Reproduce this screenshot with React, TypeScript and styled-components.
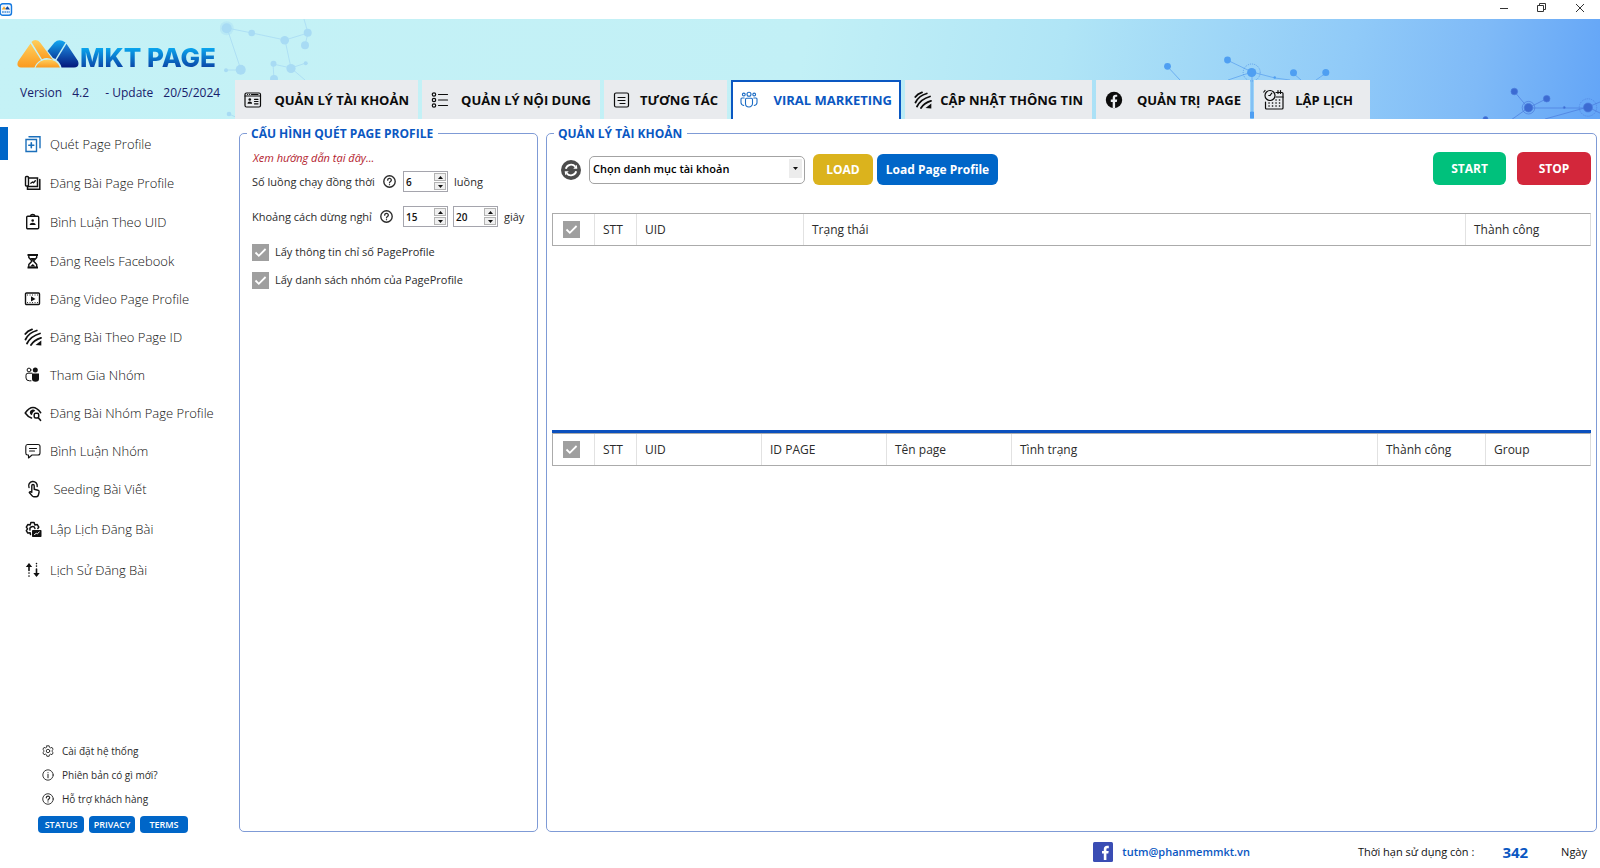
import React from "react";
import styled, { createGlobalStyle, css } from "styled-components";

const blue = "#0a57c2";
const fill = "#0066c8";
const line = "#7f9bd6";
const ink = "#2b2b2b";

const GlobalStyle = createGlobalStyle`
  * { box-sizing: border-box; }
  body {
    margin: 0;
    background: #fff;
    color: ${ink};
    font-family: "Open Sans", "Noto Sans", sans-serif;
    font-size: 12px;
    line-height: 18px;
  }
  button, input, select { font-family: inherit; }
  button { cursor: pointer; }
`;

/* ---------- shell ---------- */

const Window = styled.div`
  min-height: 100vh;
  display: flex;
  flex-direction: column;
`;

const TitleBar = styled.div`
  height: 19px;
  display: flex;
  align-items: center;
  justify-content: space-between;
`;

const WindowControls = styled.div`
  display: flex;
  gap: 18px;
  padding: 0 10px 3px 0;
  align-items: center;
`;

const WindowButton = styled.button`
  width: 20px;
  height: 16px;
  padding: 0;
  border: 0;
  background: none;
  display: flex;
  align-items: center;
  justify-content: center;
`;

const Header = styled.header`
  position: relative;
  height: 100px;
  display: flex;
  background: linear-gradient(100deg, #c5f2f6 0%, #c2f0f6 50%, #b0e5f6 66%, #90caf8 84%, #7fbaf7 92%, #63a5f7 100%);
`;

const Network = styled.svg<{ $side: "left" | "right" }>`
  position: absolute;
  top: 0;
  ${(p) => (p.$side === "left" ? "left: 220px;" : "right: 0;")}
`;

const Brand = styled.div`
  position: relative;
  width: 235px;
  flex-shrink: 0;
  padding: 21px 0 0 17px;
`;

const Logo = styled.div`
  display: flex;
  align-items: flex-end;
  gap: 1px;
  height: 28px;
`;

const LogoText = styled.span`
  font-family: Inter, sans-serif;
  font-size: 26px;
  line-height: 20px;
  font-weight: 800;
  white-space: nowrap;
  color: transparent;
  background: linear-gradient(#0aa6ee, #0a44a6);
  background-clip: text;
`;

const VersionLine = styled.div`
  display: flex;
  gap: 10px;
  margin-top: 16px;
  padding-left: 3px;
  color: #17206b;
  font-size: 12px;
  white-space: pre;
`;

const Tabs = styled.nav`
  position: relative;
  display: flex;
  align-items: flex-end;
  gap: 4px;
`;

const Tab = styled.button<{ $width: number; $active?: boolean; $end?: number }>`
  width: ${(p) => p.$width}px;
  height: 39px;
  padding: 0 ${(p) => p.$end ?? 9}px 0 9px;
  border: 0;
  display: flex;
  align-items: center;
  justify-content: space-between;
  background: #e9ebee;
  color: #0c0c0c;
  font-size: 13px;
  font-weight: 700;
  white-space: pre;
  ${(p) =>
    p.$active &&
    css`
      padding: 0 7px 2px;
      border: 2px solid ${blue};
      border-bottom: 0;
      background: #fff;
      color: ${blue};
    `}
`;

const Body = styled.div`
  flex: 1;
  display: flex;
`;

/* ---------- sidebar ---------- */

const Sidebar = styled.aside`
  width: 239px;
  flex-shrink: 0;
  display: flex;
  flex-direction: column;
  padding: 5px 0 35px;
`;

const Menu = styled.div<{ $row: number }>`
  display: flex;
  flex-direction: column;
  & > button { height: ${(p) => p.$row}px; }
`;

const MenuItem = styled.button<{ $active?: boolean }>`
  display: flex;
  align-items: center;
  padding: 0 0 0 16px;
  border: 0;
  border-left: 8px solid transparent;
  background: none;
  color: #111;
  font-size: 13px;
  line-height: 18px;
  font-weight: 300;
  text-align: left;
  white-space: pre;
  ${(p) => p.$active && css`background: linear-gradient(${fill}, ${fill}) no-repeat left center / 8px 33px border-box;`}
  & > svg { width: 18px; height: 18px; margin-right: 8px; flex-shrink: 0; }
`;

const SideFooter = styled.div`
  margin-top: auto;
  padding-left: 38px;
`;

const SideLink = styled.a`
  display: flex;
  align-items: center;
  gap: 8px;
  height: 24px;
  padding-left: 4px;
  color: ${ink};
  font-size: 10px;
  text-decoration: none;
`;

const PillRow = styled.div`
  display: flex;
  gap: 5px;
  margin-top: 5px;
`;

const Pill = styled.button<{ $width: number }>`
  width: ${(p) => p.$width}px;
  height: 17px;
  padding: 0;
  border: 0;
  border-radius: 4px;
  background: ${fill};
  color: #fff;
  font-size: 9px;
  line-height: 17px;
  font-weight: 600;
`;

/* ---------- content ---------- */

const Content = styled.main`
  flex: 1;
  min-width: 0;
  display: flex;
  flex-direction: column;
`;

const Panels = styled.div`
  flex: 1;
  display: flex;
  gap: 8px;
  padding: 4px 3px 0 0;
`;

const Panel = styled.fieldset<{ $width?: number }>`
  margin: 0;
  padding: 0 5px;
  min-width: 0;
  border: 1px solid ${line};
  border-radius: 5px;
  display: flex;
  flex-direction: column;
  ${(p) => (p.$width ? `flex: 0 0 ${p.$width}px; padding: 0 12px;` : "flex: 1;")}
`;

const Legend = styled.legend<{ $inset?: number }>`
  margin-left: ${(p) => p.$inset ?? 0}px;
  padding: 2px 5px 0 4px;
  color: ${blue};
  font-size: 12px;
  line-height: 18px;
  font-weight: 700;
`;

const GuideLink = styled.a`
  margin: 7px 0 5px 1px;
  color: #b3202c;
  font-size: 11px;
  line-height: 16px;
  font-style: italic;
  text-decoration: none;
`;

const Field = styled.div`
  display: flex;
  align-items: center;
  gap: 5px;
  height: 21px;
  margin-bottom: 14px;
  font-size: 11px;
  white-space: nowrap;
`;

const FieldLabel = styled.label`
  display: flex;
  align-items: center;
  gap: 8px;
  width: 146px;
`;

const SpinBox = styled.span`
  display: flex;
  width: 45px;
  height: 21px;
  padding: 1px;
  border: 1px solid #a5a5ad;
  background: #fff;
`;

const SpinInput = styled.input`
  flex: 1;
  min-width: 0;
  padding: 0 0 0 1px;
  border: 0;
  outline: 0;
  background: none;
  color: #111;
  font-size: 10px;
  font-weight: 600;
  appearance: textfield;
  &::-webkit-inner-spin-button { appearance: none; margin: 0; }
`;

const SpinButtons = styled.span`
  display: flex;
  flex-direction: column;
  gap: 1px;
  width: 12px;
`;

const SpinButton = styled.button`
  flex: 1;
  padding: 0;
  border: 1px solid #b4b4b4;
  background: #f0f0f0;
  display: flex;
  align-items: center;
  justify-content: center;
`;

const Unit = styled.span`
  padding-left: 1px;
`;

const CheckList = styled.div`
  display: flex;
  flex-direction: column;
  gap: 10px;
  margin-top: 2px;
`;

const CheckLine = styled.label`
  display: flex;
  align-items: center;
  gap: 6px;
  height: 18px;
  font-size: 11px;
`;

const CheckWrap = styled.span`
  display: grid;
  width: 17px;
  height: 17px;
  & > * { grid-area: 1 / 1; }
  & > svg { pointer-events: none; }
`;

const CheckInput = styled.input`
  appearance: none;
  margin: 0;
  width: 17px;
  height: 17px;
  background: #9f9f9f;
`;

const Toolbar = styled.div`
  display: flex;
  justify-content: space-between;
  align-items: flex-end;
  padding: 9px 0 0 9px;
  height: 42px;
`;

const ToolGroup = styled.div<{ $gap: number }>`
  display: flex;
  align-items: center;
  gap: ${(p) => p.$gap}px;
`;

const IconButton = styled.button`
  width: 20px;
  height: 20px;
  padding: 0;
  border: 0;
  background: none;
  display: flex;
`;

const SelectWrap = styled.span`
  display: grid;
  width: 216px;
  height: 28px;
  margin: 0 4px;
  & > * { grid-area: 1 / 1; }
`;

const Select = styled.select`
  appearance: none;
  padding: 0 20px 3px 3px;
  border: 1px solid #a3a3a3;
  border-radius: 5px;
  background: #fff;
  color: #000;
  font-size: 11px;
  font-weight: 600;
`;

const SelectArrow = styled.span`
  justify-self: end;
  align-self: center;
  width: 13px;
  height: 19px;
  margin: 0 3px 3px 0;
  background: #ececec;
  display: flex;
  align-items: center;
  justify-content: center;
  pointer-events: none;
`;

const Action = styled.button<{ $color: string; $width: number; $tall?: boolean }>`
  width: ${(p) => p.$width}px;
  height: ${(p) => (p.$tall ? 33 : 31)}px;
  padding: 0;
  border: 0;
  border-radius: 6px;
  background: ${(p) => p.$color};
  color: #fff;
  font-size: 12px;
  font-weight: 700;
  white-space: nowrap;
`;

const GridArea = styled.section<{ $grow: number; $split?: boolean }>`
  flex: ${(p) => p.$grow} 0 0;
  margin-top: ${(p) => (p.$split ? 0 : 28)}px;
  ${(p) => p.$split && css`border-top: 3px solid #0b50bd;`}
`;

const Table = styled.table`
  width: 100%;
  table-layout: fixed;
  border-collapse: separate;
  border-spacing: 0;
  border: 1px solid #ababab;
  border-right-color: #dcdcdc;
`;

const Th = styled.th`
  height: 31px;
  padding: 0 8px;
  border-right: 1px solid #e2e2e2;
  text-align: left;
  font-size: 12px;
  font-weight: 400;
  white-space: nowrap;
  &:first-child { padding-left: 10px; }
  &:last-child { border-right: 0; }
`;

const StatusBar = styled.footer`
  height: 36px;
  display: flex;
  align-items: center;
  justify-content: flex-end;
  padding: 4px 13px 0 0;
  color: #111;
  font-size: 11px;
`;

const Mail = styled.a`
  display: flex;
  align-items: center;
  gap: 9px;
  margin-right: 108px;
  color: ${blue};
  font-weight: 600;
  text-decoration: none;
`;

const Days = styled.strong`
  margin: 0 33px 0 28px;
  color: ${blue};
  font-size: 15px;
`;

/* ---------- icons ---------- */

const Icon = ({ size = 18, box = 18, children }: { size?: number; box?: number; children: React.ReactNode }) => (
  <svg width={size} height={size} viewBox={`0 0 ${box} ${box}`} fill="none" stroke="currentColor" strokeWidth="1.4" strokeLinecap="round" strokeLinejoin="round" aria-hidden="true">
    {children}
  </svg>
);

const IdWindow = () => (
  <Icon>
    <g strokeWidth="1.200">
      <rect x="1" y="2" width="15.500" height="14" rx="1.500" />
      <path d="M1 5h15.500M3.500 3.500h.1M5.500 3.500h.1M7.500 3.500h6.500" />
      <circle cx="5.800" cy="8.500" r="1.300" fill="currentColor" stroke="none" />
      <path d="M3.500 12.800c0-3 4.600-3 4.600 0z" fill="currentColor" stroke="none" />
      <path d="M10.500 8.300h3.500M10.500 10.500h3.500M10.500 12.800h3.500" />
    </g>
  </Icon>
);
const BulletList = () => (
  <Icon>
    <g strokeWidth="1.200">
      <circle cx="3" cy="3.500" r="1.700" /><circle cx="3" cy="9" r="1.700" /><circle cx="3" cy="14.500" r="1.700" />
      <path d="M7.500 3.500h9M7.500 9h9M7.500 14.500h9" />
    </g>
  </Icon>
);
const Note = () => (
  <Icon>
    <g strokeWidth="1.200">
      <rect x="1.500" y="2" width="14" height="14" rx="1.500" />
      <path d="M5 6.500h7M5 9.500h7M7 12.500h5" />
    </g>
  </Icon>
);
const Crowd = () => (
  <Icon>
    <g stroke="#1c6cc4" strokeWidth="1.100">
      <circle cx="9" cy="3.300" r="2" /><circle cx="3.800" cy="3.500" r="1.400" /><circle cx="14.200" cy="3.500" r="1.400" />
      <path d="M5.500 8.500q0-1.200 1.200-1.200h4.600q1.200 0 1.200 1.200v4a3.500 3.500 0 0 1-7 0z" />
      <path d="M4.200 7H2Q1 7 1 8v3.500q0 2.500 2.800 3M13.800 7H16q1 0 1 1v3.500q0 2.500-2.800 3" />
    </g>
  </Icon>
);
const Waves = () => (
  <Icon>
    <g strokeWidth="1.800">
      <path d="M1.300 6Q3.500 2.500 8 1.300M1.500 11.500Q5 4.500 12.800 2.500M3 15.500Q7 8 16 5.500M7 17Q10 12 17 9.800" />
    </g>
    <path d="M11.500 17l5.800-4.500v5z" fill="currentColor" stroke="none" />
  </Icon>
);
const FacebookRound = () => (
  <Icon>
    <circle cx="9" cy="9" r="8.200" fill="currentColor" stroke="none" />
    <path d="M7.700 17v-6H5.800V8.600h1.900V7c0-2.100 1.200-3.200 3-3.200.8 0 1.500.1 1.500.1v1.900h-.9c-.9 0-1.200.5-1.200 1.200v1.600h2.100l-.4 2.400h-1.700v6z" fill="#e9ebee" stroke="none" />
  </Icon>
);
const Schedule = () => (
  <Icon size={21} box={21}>
    <g strokeWidth="1.200">
      <path d="M2.500 13v6q0 1 1 1h15.500q1 0 1-1V4.500q0-1-1-1H13" />
      <circle cx="7" cy="6.500" r="5" />
      <path d="M7 6.500l1.800-2.300M2 1.500L.8 3M5.800 6.500h1.300M15 1.500v3M17.500 1.500v3" />
      <path d="M13 8h7" />
    </g>
    <path d="M6 14h.1M9.500 14h.1M13 14h.1M16.500 14h.1M6 17h.1M9.500 17h.1M13 17h.1M16.500 17h.1M13 11h.1M16.500 11h.1" strokeWidth="1.600" />
  </Icon>
);
const AddCopies = () => (
  <g stroke="#1b6fbb">
    <path d="M2 4.500h10.500v12H2zM5 1.800h11v11" strokeLinejoin="miter" />
    <path d="M7.300 7.800v5M4.800 10.300h5" strokeWidth="1.600" />
  </g>
);
const PagePhotos = () => (
  <>
    <rect x="1.500" y="2.500" width="3" height="9.500" rx="1" />
    <path d="M4.500 4h9v8.500H4.500M3.500 12.500v2.800H15.800V5.500" strokeLinejoin="miter" strokeWidth="1.500" />
    <path d="M6.800 9.200l1.700-1.200 1 .8 1.800-2" />
  </>
);
const Badge = () => (
  <>
    <rect x="2.700" y="3.200" width="12" height="12.500" rx="1" />
    <path d="M6.500 3c.3-2 4-2 4.400 0" />
    <circle cx="8.700" cy="7.500" r="1.300" fill="currentColor" stroke="none" />
    <path d="M5.700 12c0-3 6-3 6 0z" fill="currentColor" stroke="none" />
  </>
);
const Hourglass = () => (
  <>
    <path d="M3.500 3h10.500M3.500 15.500h10.500" strokeWidth="2" strokeLinecap="butt" />
    <path d="M4.800 3v2.500L8 9l-3.200 3.500V15M12.700 3v2.500L9.500 9l3.200 3.500V15" />
    <path d="M6 6h5.500L8.800 9zM6 14.500l2.800-2.500 2.700 2.500z" fill="currentColor" stroke="none" />
  </>
);
const Film = () => (
  <>
    <rect x="1.500" y="3" width="14" height="11.500" rx="1" />
    <path d="M3.500 5h.1M6 5h.1M8.500 5h.1M11 5h.1M13.500 5h.1M3.500 12.600h.1M6 12.600h.1M8.500 12.600h.1M11 12.600h.1M13.500 12.600h.1" strokeWidth="1" />
    <path d="M7 6.300l4.500 2.600L7 11.500z" fill="currentColor" stroke="none" />
  </>
);
const Pair = () => (
  <>
    <circle cx="5" cy="4" r="1.900" strokeWidth="1" />
    <path d="M8 7.200H4q-2 0-2 2V12q0 2.800 3.500 2.800H7" strokeWidth="1" />
    <circle cx="11.300" cy="4" r="2.500" fill="currentColor" stroke="none" />
    <path d="M8 7.500h7v5.500q0 2.800-3.500 2.800T8 13z" fill="currentColor" stroke="none" />
  </>
);
const EyeSearch = () => (
  <>
    <path d="M7.500 14Q4 13 1.200 9 5 3.500 9 3.500T16.700 8.700" strokeWidth="1.500" />
    <path d="M5.800 8.500a3 3 0 0 1 5.500-1.600Q8.300 7.500 8 11.200 5.800 10.800 5.800 8.500z" fill="currentColor" stroke="none" />
    <rect x="10.200" y="9.200" width="4.500" height="4.800" rx="1.500" strokeWidth="1.500" />
    <path d="M14.300 13.800l2.200 2.500" strokeWidth="1.700" />
  </>
);
const Comment = () => (
  <g strokeWidth="1.100">
    <path d="M3.500 2.500h10.500q2 0 2 2v6.500q0 2-2 2H8L4.500 16v-3h-1q-1.700 0-1.700-2V4.500q0-2 1.700-2z" />
    <path d="M5.500 6.500h7M5.500 9h5" />
  </g>
);
const Touch = () => (
  <>
    <path d="M5 7.500A4.300 4.300 0 1 1 13.200 6.500" />
    <path d="M7.800 11.500V5.800q0-1.300 1.200-1.300t1.200 1.300v3.500l3.800.9q1.300.4 1.100 1.800l-.7 3q-.4 1.700-2 1.700H9.800q-1 0-1.600-.8L5.300 12.500q1-1.500 2.500-.2" />
  </>
);
const GearPost = () => (
  <>
    <path d="M6.500 14.500l-.3-1.700-2.400.3-1.500-2.500 1.300-1.700-1.300-1.800 1.500-2.500 2.400.3.700-2.400h3.200l.8 2.400 2.400-.3 1.500 2.500-1 1.400" strokeWidth="1.500" />
    <path d="M6 10a2.600 2.600 0 0 1 5-1.500" />
    <rect x="8" y="10" width="9.500" height="7" rx=".8" fill="currentColor" stroke="none" />
    <path d="M10.500 14.500l1.800-1.200 1 .5 2-1.800" stroke="#fff" strokeWidth="1" />
  </>
);
const UpDown = () => (
  <>
    <path d="M5 3.500v6M5 12v.1M5 15v.1M12.500 14v-6M12.500 5v.1M12.500 2.500v.1" strokeWidth="1.600" />
    <path d="M1.800 6L5 2l3.200 4zM9.300 12l3.200 4 3.200-4z" fill="currentColor" stroke="none" />
  </>
);
const Gear = () => (
  <Icon size={12} box={18}>
    <circle cx="9" cy="9" r="2.600" />
    <path d="M7.300 1.200h3.400l.5 2.200 1.700 1 2.100-.8 1.700 3-1.600 1.500v1.900l1.600 1.500-1.700 3-2.100-.8-1.700 1-.5 2.200H7.300l-.5-2.200-1.700-1-2.100.8-1.700-3 1.600-1.500V8.100L1.300 6.600l1.700-3 2.100.8 1.700-1z" />
  </Icon>
);
const Info = () => (
  <Icon size={12}>
    <circle cx="9" cy="9" r="7.800" />
    <path d="M9 8v5M9 5.300v.1" strokeWidth="1.600" />
  </Icon>
);
const Help = ({ size = 12 }: { size?: number }) => (
  <Icon size={size}>
    <circle cx="9" cy="9" r="7.900" strokeWidth={size > 12 ? 1.9 : 1.4} />
    <path d="M6.500 7.200c0-3.500 5.200-3.200 5 0 0 1.800-2.500 1.800-2.500 3.600M9 13.300v.1" strokeWidth="1.800" />
  </Icon>
);
const Tick = () => (
  <svg width="17" height="17" viewBox="0 0 17 17" fill="none" stroke="#fff" strokeWidth="1.800" aria-hidden="true">
    <path d="M3.500 8.500l3.300 3.300 6.800-6.800" />
  </svg>
);
const Arrow = ({ up }: { up?: boolean }) => (
  <svg width="5" height="3" viewBox="0 0 5 3" aria-hidden="true">
    <path d={up ? "M0 3L2.500 0 5 3z" : "M0 0h5L2.500 3z"} fill="#111" />
  </svg>
);
const Refresh = () => (
  <svg width="20" height="20" viewBox="0 0 20 20" fill="none" aria-hidden="true">
    <circle cx="10" cy="10" r="10" fill="#4c4c4c" />
    <path d="M4.800 8.800A5.500 5.500 0 0 1 14.300 6.600M15.200 11.200A5.500 5.500 0 0 1 5.700 13.400" stroke="#fff" strokeWidth="1.900" />
    <path d="M12.300 8.800l4-.1-.5-4zM7.700 11.200l-4 .1.500 4z" fill="#fff" />
  </svg>
);
const LogoMark = () => (
  <svg width="62" height="28" viewBox="0 0 62 28" aria-hidden="true">
    <defs>
      <linearGradient id="amber" x1="0" y1="0" x2="0" y2="1">
        <stop offset="0" stopColor="#ffcf5c" /><stop offset="1" stopColor="#fb9a1f" />
      </linearGradient>
      <linearGradient id="sky" x1="0" y1="0" x2="0" y2="1">
        <stop offset="0" stopColor="#12a8f2" /><stop offset="1" stopColor="#0a3f9f" />
      </linearGradient>
      <linearGradient id="navy" x1="0" y1="0" x2="0" y2="1">
        <stop offset="0" stopColor="#1b86dd" /><stop offset="1" stopColor="#04187c" />
      </linearGradient>
    </defs>
    <path d="M13.500 3.500L1 21.500Q-1 27 4 27.500H17.500q1.500-5 6.500-7.500z" fill="url(#amber)" />
    <path d="M14.500 2Q16 0 18.500 0q3 0 5 3l12.500 17q-5.500-3.500-11-.8z" fill="url(#amber)" />
    <path d="M30.500 11l7-8.500Q42 -2 48.500 2.500L38.500 19 36 18z" fill="url(#sky)" />
    <path d="M49.500 3.800L61 21q2 6-4 6.500H44.500Q43.500 23 39.500 20z" fill="url(#navy)" />
    <path d="M18.500 27.500Q22 19.500 31 19.500t12 8z" fill="url(#amber)" />
  </svg>
);
const AppBadge = () => (
  <svg width="13" height="13" viewBox="0 0 13 13" aria-hidden="true">
    <rect x=".2" y=".7" width="11.300" height="11.600" rx="2.500" fill="#eef6ff" stroke="#1579e0" strokeWidth="1.400" />
    <path d="M1.800 6.500L4 3.200l2.300 3.300z" fill="#f9a825" />
    <path d="M5.500 5.500L7.500 3.200 10 6.500H6z" fill="#0d47a1" />
    <path d="M2 9h8" stroke="#4a90d9" strokeWidth="1.500" strokeDasharray="1.800 .6" />
  </svg>
);
const FacebookSquare = () => (
  <svg width="20" height="20" viewBox="0 0 20 20" aria-hidden="true">
    <rect width="20" height="20" rx="1.500" fill="#3a4db4" />
    <path d="M10.800 18v-6.500H9V9h1.800V7.300c0-2.300 1.200-3.500 3.300-3.500h1.700v2.500h-1.200c-.9 0-1.200.4-1.200 1.200V9h2.300l-.4 2.500h-1.900V18z" fill="#fff" />
  </svg>
);

/* ---------- data ---------- */

const tabs = [
  { label: "QUẢN LÝ TÀI KHOẢN", width: 183, icon: <IdWindow /> },
  { label: "QUẢN LÝ NỘI DUNG", width: 178, icon: <BulletList /> },
  { label: "TƯƠNG TÁC", width: 123, icon: <Note /> },
  { label: "VIRAL MARKETING", width: 170, icon: <Crowd />, active: true },
  { label: "CẬP NHẬT THÔNG TIN", width: 187, icon: <Waves /> },
  { label: "QUẢN TRỊ  PAGE", width: 154, icon: <FacebookRound /> },
  { label: "LẬP LỊCH", width: 116, icon: <Schedule />, end: 17 },
];

const menus = [
  {
    row: 39,
    items: [
      { label: "Quét Page Profile", icon: <AddCopies />, active: true },
      { label: "Đăng Bài Page Profile", icon: <PagePhotos /> },
      { label: "Bình Luận Theo UID", icon: <Badge /> },
      { label: "Đăng Reels Facebook", icon: <Hourglass /> },
    ],
  },
  {
    row: 38,
    items: [
      { label: "Đăng Video Page Profile", icon: <Film /> },
      { label: "Đăng Bài Theo Page ID", icon: null },
      { label: "Tham Gia Nhóm", icon: <Pair /> },
      { label: "Đăng Bài Nhóm Page Profile", icon: <EyeSearch /> },
      { label: "Bình Luận Nhóm", icon: <Comment /> },
      { label: " Seeding Bài Viết", icon: <Touch /> },
    ],
  },
  {
    row: 41,
    items: [
      { label: "Lập Lịch Đăng Bài", icon: <GearPost /> },
      { label: "Lịch Sử Đăng Bài", icon: <UpDown /> },
    ],
  },
];

const accountColumns = [
  { label: "STT", width: 42 },
  { label: "UID", width: 167 },
  { label: "Trạng thái" },
  { label: "Thành công", width: 124 },
];

const pageColumns = [
  { label: "STT", width: 42 },
  { label: "UID", width: 125 },
  { label: "ID PAGE", width: 125 },
  { label: "Tên page", width: 125 },
  { label: "Tình trạng" },
  { label: "Thành công", width: 108 },
  { label: "Group", width: 104 },
];

/* ---------- parts ---------- */

const Check = ({ id, label }: { id?: string; label?: string }) => (
  <CheckWrap>
    <CheckInput id={id} type="checkbox" defaultChecked aria-label={label} />
    <Tick />
  </CheckWrap>
);

const Spinner = ({ id, value, label }: { id?: string; value: number; label?: string }) => {
  const [n, setN] = React.useState(value);
  return (
    <SpinBox>
      <SpinInput id={id} type="number" value={n} aria-label={label} onChange={(e) => setN(Number(e.target.value))} />
      <SpinButtons>
        <SpinButton type="button" aria-label="Tăng" onClick={() => setN(n + 1)}><Arrow up /></SpinButton>
        <SpinButton type="button" aria-label="Giảm" onClick={() => setN(n - 1)}><Arrow /></SpinButton>
      </SpinButtons>
    </SpinBox>
  );
};

const HeaderTable = ({ columns }: { columns: { label: string; width?: number }[] }) => (
  <Table>
    <colgroup>
      <col width={42} />
      {columns.map((c) => <col key={c.label} width={c.width} />)}
    </colgroup>
    <thead>
      <tr>
        <Th scope="col"><Check label="Chọn tất cả" /></Th>
        {columns.map((c) => <Th key={c.label} scope="col">{c.label}</Th>)}
      </tr>
    </thead>
  </Table>
);

const LeftNetwork = () => (
  <Network $side="left" width="110" height="100" viewBox="220 19 110 100" fill="#a8dbf4" aria-hidden="true">
    <path d="M227 28l25 5 33 7 23-7-4-14M308 33l-3 12M227 28l14 42h-15M273 64l18 4 15-5M273 64l1 15M285 40l6 28 14 12M229 114l11 5" fill="none" stroke="#a8dbf4" strokeWidth=".8" />
    <circle cx="226.700" cy="28.300" r="7" fillOpacity=".4" />
    {[[226.7, 28.3, 5], [251.7, 33, 3.3], [284.7, 40.3, 4.3], [307.7, 32.7, 4], [305, 45.3, 4], [273.5, 63.7, 3], [291, 68.5, 4.6], [305.7, 63.3, 2], [240.7, 69.7, 5], [226, 70.3, 2], [274, 79, 4], [229, 114, 2.3]].map(([x, y, r]) => (
      <circle key={`${x}-${y}`} cx={x} cy={y} r={r} />
    ))}
  </Network>
);

const RightNetwork = () => (
  <Network $side="right" width="450" height="100" viewBox="1150 19 450 100" fill="#4f9ff2" aria-hidden="true">
    <path d="M1167 66l13 14M1227 60l25 12-24 8M1252 72l23 6 15 2M1293 73l8 7M1326 73l-10 7M1252 72v44" fill="none" stroke="#5fa5ef" strokeWidth=".8" />
    <circle cx="1251.700" cy="72.500" r="8.500" fill="none" stroke="#4a8fe6" strokeWidth=".7" strokeDasharray="1 1" />
    {[[1167.5, 66.3, 3.4], [1227.5, 60, 3.4], [1251.7, 72.5, 4.6], [1274.7, 77.5, 1.2], [1293.5, 72.7, 3.5], [1325.8, 72.5, 3.5], [1252, 115, 3.5]].map(([x, y, r]) => (
      <circle key={`${x}-${y}`} cx={x} cy={y} r={r} />
    ))}
    <g fill="#3c6bd2" stroke="#4a7bdc" strokeWidth=".7">
      <path d="M1514 91l14 17 18-9M1528 108h60M1528 108l-17 12M1588 107l-43 12M1588 107l12-5M1588 107l12 6" fill="none" />
      <circle cx="1528.500" cy="107.700" r="6.300" fill="none" />
      <circle cx="1588" cy="107.500" r="8.700" fill="none" strokeDasharray="1 1" />
      {[[1514.3, 91.5, 3.3], [1546.7, 98.7, 3.3], [1528.5, 107.7, 4.3], [1564.3, 107.5, 1], [1588, 107.5, 4.5], [1485.5, 119, 2.5]].map(([x, y, r]) => (
        <circle key={`${x}-${y}`} cx={x} cy={y} r={r} />
      ))}
    </g>
  </Network>
);

export default function App() {
  return (
    <Window>
      <GlobalStyle />
      <TitleBar>
        <AppBadge />
        <WindowControls>
          <WindowButton aria-label="Thu nhỏ">
            <svg width="10" height="10" viewBox="0 0 10 10"><path d="M1 5.500h8" stroke="#333" /></svg>
          </WindowButton>
          <WindowButton aria-label="Khôi phục">
            <svg width="10" height="10" viewBox="0 0 10 10" fill="none" stroke="#333"><path d="M.5 2.500h6v6h-6zM2.500 2.500v-2h6v6h-2" /></svg>
          </WindowButton>
          <WindowButton aria-label="Đóng">
            <svg width="10" height="10" viewBox="0 0 10 10" stroke="#333"><path d="M1 1l8 8M9 1L1 9" /></svg>
          </WindowButton>
        </WindowControls>
      </TitleBar>

      <Header>
        <LeftNetwork />
        <RightNetwork />
        <Brand>
          <Logo>
            <LogoMark />
            <LogoText>MKT PAGE</LogoText>
          </Logo>
          <VersionLine>
            <span>Version</span>
            <span>4.2</span>
            <span>{"  - Update"}</span>
            <span>20/5/2024</span>
          </VersionLine>
        </Brand>
        <Tabs>
          {tabs.map((t) => (
            <Tab key={t.label} $width={t.width} $active={t.active} $end={t.end}>
              {t.icon}
              <span>{t.label}</span>
            </Tab>
          ))}
        </Tabs>
      </Header>

      <Body>
        <Sidebar>
          {menus.map((m) => (
            <Menu key={m.row} $row={m.row}>
              {m.items.map((i) => (
                <MenuItem key={i.label} $active={i.active}>
                  {i.icon ? <Icon>{i.icon}</Icon> : <Waves />}
                  {i.label}
                </MenuItem>
              ))}
            </Menu>
          ))}
          <SideFooter>
            <SideLink href="#settings"><Gear />Cài đặt hệ thống</SideLink>
            <SideLink href="#news"><Info />Phiên bản có gì mới?</SideLink>
            <SideLink href="#support"><Help />Hỗ trợ khách hàng</SideLink>
            <PillRow>
              <Pill $width={46}>STATUS</Pill>
              <Pill $width={46}>PRIVACY</Pill>
              <Pill $width={48}>TERMS</Pill>
            </PillRow>
          </SideFooter>
        </Sidebar>

        <Content>
          <Panels>
            <Panel $width={299}>
              <Legend $inset={-5}>CẤU HÌNH QUÉT PAGE PROFILE</Legend>
              <GuideLink href="#guide">Xem hướng dẫn tại đây...</GuideLink>
              <Field>
                <FieldLabel htmlFor="threads">Số luồng chạy đồng thời<Help size={13} /></FieldLabel>
                <Spinner id="threads" value={6} />
                <Unit>luồng</Unit>
              </Field>
              <Field>
                <FieldLabel htmlFor="rest">Khoảng cách dừng nghỉ<Help size={13} /></FieldLabel>
                <Spinner id="rest" value={15} />
                <Spinner value={20} label="Khoảng cách tối đa" />
                <Unit>giây</Unit>
              </Field>
              <CheckList>
                <CheckLine htmlFor="stats"><Check id="stats" />Lấy thông tin chỉ số PageProfile</CheckLine>
                <CheckLine htmlFor="groups"><Check id="groups" />Lấy danh sách nhóm của PageProfile</CheckLine>
              </CheckList>
            </Panel>

            <Panel>
              <Legend $inset={2}>QUẢN LÝ TÀI KHOẢN</Legend>
              <Toolbar>
                <ToolGroup $gap={4}>
                  <IconButton aria-label="Làm mới"><Refresh /></IconButton>
                  <SelectWrap>
                    <Select aria-label="Danh mục tài khoản">
                      <option>Chọn danh mục tài khoản</option>
                    </Select>
                    <SelectArrow><Arrow /></SelectArrow>
                  </SelectWrap>
                  <Action $color="#dbb31d" $width={60}>LOAD</Action>
                  <Action $color={fill} $width={121}>Load Page Profile</Action>
                </ToolGroup>
                <ToolGroup $gap={11}>
                  <Action $color="#00c17c" $width={73} $tall>START</Action>
                  <Action $color="#d3273b" $width={74} $tall>STOP</Action>
                </ToolGroup>
              </Toolbar>
              <GridArea $grow={217}><HeaderTable columns={accountColumns} /></GridArea>
              <GridArea $grow={398} $split><HeaderTable columns={pageColumns} /></GridArea>
            </Panel>
          </Panels>
          <StatusBar>
            <Mail href="mailto:tutm@phanmemmkt.vn"><FacebookSquare />tutm@phanmemmkt.vn</Mail>
            <span>Thời hạn sử dụng còn :</span>
            <Days>342</Days>
            <span>Ngày</span>
          </StatusBar>
        </Content>
      </Body>
    </Window>
  );
}
